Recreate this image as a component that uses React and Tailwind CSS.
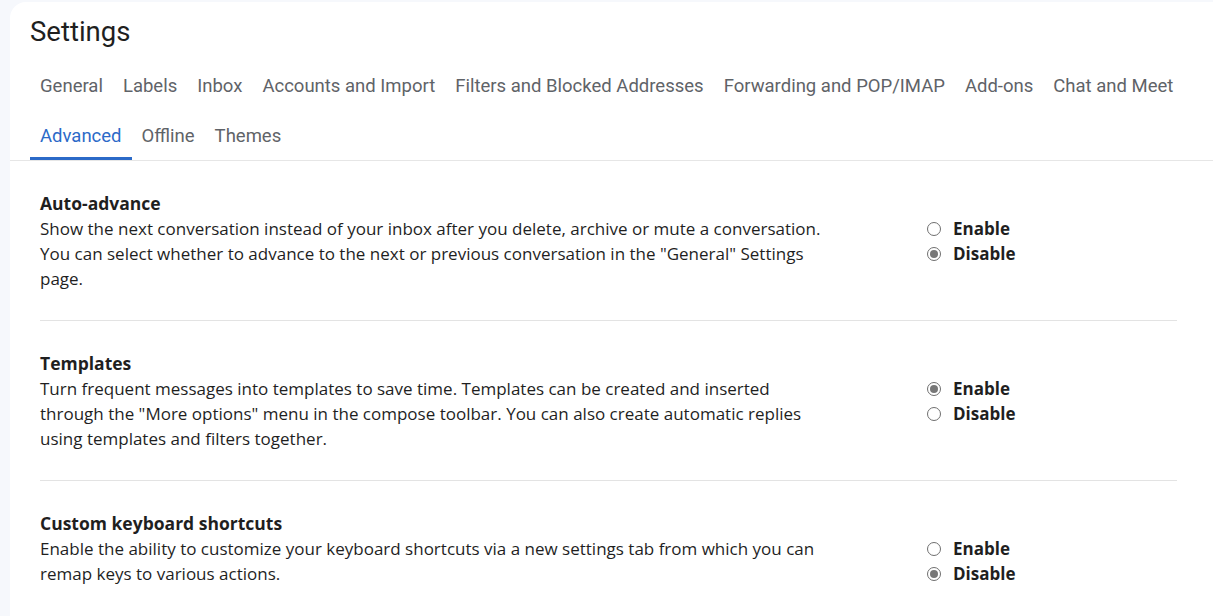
import { useState } from 'react';

const tabsRow1 = [
  'General',
  'Labels',
  'Inbox',
  'Accounts and Import',
  'Filters and Blocked Addresses',
  'Forwarding and POP/IMAP',
  'Add-ons',
  'Chat and Meet',
];
const tabsRow2 = ['Advanced', 'Offline', 'Themes'];

const sections = [
  {
    id: 'auto',
    title: 'Auto-advance',
    text: 'Show the next conversation instead of your inbox after you delete, archive or mute a conversation. You can select whether to advance to the next or previous conversation in the "General" Settings page.',
    value: 'disable',
  },
  {
    id: 'templates',
    title: 'Templates',
    text: 'Turn frequent messages into templates to save time. Templates can be created and inserted through the "More options" menu in the compose toolbar. You can also create automatic replies using templates and filters together.',
    value: 'enable',
  },
  {
    id: 'shortcuts',
    title: 'Custom keyboard shortcuts',
    text: 'Enable the ability to customize your keyboard shortcuts via a new settings tab from which you can remap keys to various actions.',
    value: 'disable',
  },
];

const body = { fontFamily: '"Open Sans", "Noto Sans", sans-serif' };

function Radio({ checked, label, onClick }) {
  return (
    <button onClick={onClick} className="flex items-center h-[25px] text-left">
      <span className="w-[14px] h-[14px] rounded-full border border-[#6f6f6f] bg-white flex items-center justify-center">
        {checked && <span className="w-[8px] h-[8px] rounded-full bg-[#777777]" />}
      </span>
      <span className="ml-[12px] text-[17px] font-bold text-[#1f1f1f]">{label}</span>
    </button>
  );
}

function Section({ section, last, value, onChange }) {
  return (
    <div className={`mx-[10px] py-[29px] ${last ? '' : 'border-b border-[#e3e3e3]'}`} style={body}>
      <div className="text-[17.5px] leading-[26px] font-bold text-[#1f1f1f]">{section.title}</div>
      <div className="flex">
        <p className="w-[790px] shrink-0 text-[17px] leading-[25px] text-[#1f1f1f]">{section.text}</p>
        <div className="ml-[97px] flex flex-col">
          <Radio checked={value === 'enable'} label="Enable" onClick={() => onChange('enable')} />
          <Radio checked={value === 'disable'} label="Disable" onClick={() => onChange('disable')} />
        </div>
      </div>
    </div>
  );
}

export default function App() {
  const [values, setValues] = useState(
    Object.fromEntries(sections.map((s) => [s.id, s.value]))
  );

  return (
    <div
      className="w-[1213px] h-[616px] overflow-hidden bg-[#f6f8fc] pl-[10px] pt-[2px]"
      style={{ fontFamily: 'Roboto, "Noto Sans", sans-serif' }}
    >
      <div className="bg-white rounded-tl-[16px] h-full">
        <div className="border-b border-[#e6e6e6]">
          <h1 className="pl-[20px] pt-[13px] text-[27.5px] leading-[34px] font-normal text-[#1f1f1f]">
            Settings
          </h1>
          <nav className="mt-[12px] pl-[20px]">
            <div className="flex h-[50px] items-center pt-[2px]">
              {tabsRow1.map((t) => (
                <a key={t} href="#" className="px-[10px] text-[18.5px] text-[#5f6368] whitespace-nowrap">
                  {t}
                </a>
              ))}
            </div>
            <div className="flex h-[49px]">
              {tabsRow2.map((t) => (
                <a
                  key={t}
                  href="#"
                  className={`px-[10px] pt-[5px] flex items-center text-[18.5px] whitespace-nowrap border-b-[3px] ${
                    t === 'Advanced' ? 'text-[#2b6ac8] border-[#2b6ac8]' : 'text-[#5f6368] border-transparent'
                  }`}
                >
                  {t}
                </a>
              ))}
            </div>
          </nav>
        </div>
        <div className="pl-[20px] pr-[26px]">
          {sections.map((s, i) => (
            <Section
              key={s.id}
              section={s}
              last={i === sections.length - 1}
              value={values[s.id]}
              onChange={(v) => setValues({ ...values, [s.id]: v })}
            />
          ))}
        </div>
      </div>
    </div>
  );
}
